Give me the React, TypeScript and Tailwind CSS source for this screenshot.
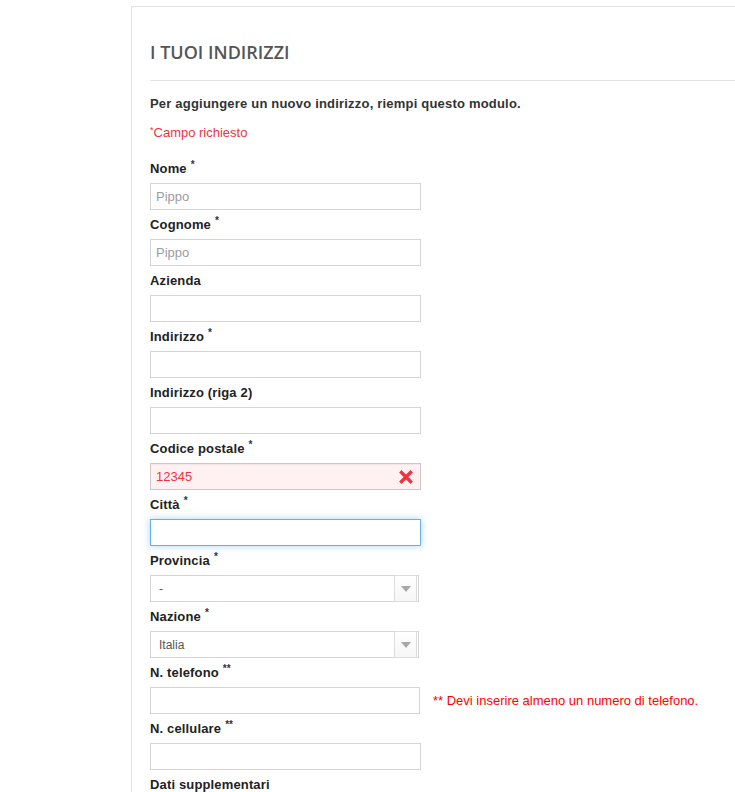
import React from 'react';

const labelFont = { fontFamily: '"Liberation Sans", Arial, sans-serif' };

function Star({ count = 1 }: { count?: number }) {
  return (
    <sup className="relative -top-[5px] ml-[4px] text-[10px] font-bold tracking-normal text-[#1d3557]">
      {'*'.repeat(count)}
    </sup>
  );
}

function Label({ text, stars = 0 }: { text: string; stars?: number }) {
  return (
    <label className="block h-[18px] pt-[1px] text-[13px] font-bold leading-[18px] tracking-[0.15px] text-[#222]">
      {text}
      {stars > 0 && <Star count={stars} />}
    </label>
  );
}

function TextInput({ placeholder, value, state }: { placeholder?: string; value?: string; state?: 'error' | 'focus' }) {
  let cls = 'border-[#d6d4d4] bg-white';
  if (state === 'error') cls = 'border-[#d0c6c6] bg-[#fff1f2] shadow-[inset_0_1px_1px_rgba(0,0,0,0.05)]';
  if (state === 'focus') cls = 'border-[#66afe9] bg-white shadow-[0_0_7px_rgba(102,175,233,0.55)]';
  return (
    <div className={`relative mt-[6px] flex h-[27px] w-[271px] items-center border px-[5px] text-[13px] ${cls}`}>
      {value ? (
        <span className="text-[#f13340]">{value}</span>
      ) : (
        <span className="text-[#9c9c9c]">{placeholder}</span>
      )}
      {state === 'error' && (
        <svg className="absolute right-[7px] top-[6px]" width="14" height="14" viewBox="0 0 14 14">
          <path d="M2.5 2.5 L11.5 11.5 M11.5 2.5 L2.5 11.5" stroke="#f13340" strokeWidth="3.4" strokeLinecap="square" />
        </svg>
      )}
    </div>
  );
}

function SelectBox({ value }: { value: string }) {
  return (
    <div className="relative mt-[6px] flex h-[27px] w-[269px] items-center border border-[#d6d4d4] bg-white pl-[8px] text-[12px] text-[#555]">
      <span>{value}</span>
      <div className="absolute right-[1px] top-[-1px] flex h-[27px] w-[23px] items-center justify-center border border-[#dcdcdc] bg-gradient-to-b from-white to-[#f6f6f6]">
        <div className="h-0 w-0 border-x-[5px] border-t-[6px] border-x-transparent border-t-[#a8a8a8]" />
      </div>
    </div>
  );
}

function Field({ children }: { children: React.ReactNode }) {
  return <div className="mb-[5px]">{children}</div>;
}

export default function App() {
  return (
    <div className="h-[792px] w-[735px] overflow-hidden bg-white pl-[131px] pt-[6px]" style={labelFont}>
      <div className="w-[700px] border-l border-t border-[#e3e3e3] pl-[18px] pt-[33px]">
        <h1
          className="border-b border-[#e3e3e3] pb-[16px] text-[18px] font-semibold leading-[24px] text-[#555]"
          style={{ fontFamily: '"Open Sans", sans-serif' }}
        >
          I TUOI INDIRIZZI
        </h1>

        <p className="mt-[14px] h-[18px] text-[13px] font-bold leading-[18px] tracking-[0.2px] text-[#333]">
          Per aggiungere un nuovo indirizzo, riempi questo modulo.
        </p>
        <p className="mt-[11px] h-[18px] text-[13px] leading-[18px] text-[#f13340]">
          <sup className="text-[9px]">*</sup>Campo richiesto
        </p>

        <div className="mt-[17px]">
          <Field>
            <Label text="Nome" stars={1} />
            <TextInput placeholder="Pippo" />
          </Field>
          <Field>
            <Label text="Cognome" stars={1} />
            <TextInput placeholder="Pippo" />
          </Field>
          <Field>
            <Label text="Azienda" />
            <TextInput />
          </Field>
          <Field>
            <Label text="Indirizzo" stars={1} />
            <TextInput />
          </Field>
          <Field>
            <Label text="Indirizzo (riga 2)" />
            <TextInput />
          </Field>
          <Field>
            <Label text="Codice postale" stars={1} />
            <TextInput value="12345" state="error" />
          </Field>
          <Field>
            <Label text="Città" stars={1} />
            <TextInput state="focus" />
          </Field>
          <Field>
            <Label text="Provincia" stars={1} />
            <SelectBox value="-" />
          </Field>
          <Field>
            <Label text="Nazione" stars={1} />
            <SelectBox value="Italia" />
          </Field>
          <Field>
            <Label text="N. telefono" stars={2} />
            <div className="flex items-center">
              <div className="mt-[6px] h-[27px] w-[270px] border border-[#d6d4d4] bg-white" />
              <span className="ml-[13px] mt-[6px] text-[13px] text-[#f00]">
                ** Devi inserire almeno un numero di telefono.
              </span>
            </div>
          </Field>
          <Field>
            <Label text="N. cellulare" stars={2} />
            <TextInput />
          </Field>
          <Field>
            <Label text="Dati supplementari" />
          </Field>
        </div>
      </div>
    </div>
  );
}
